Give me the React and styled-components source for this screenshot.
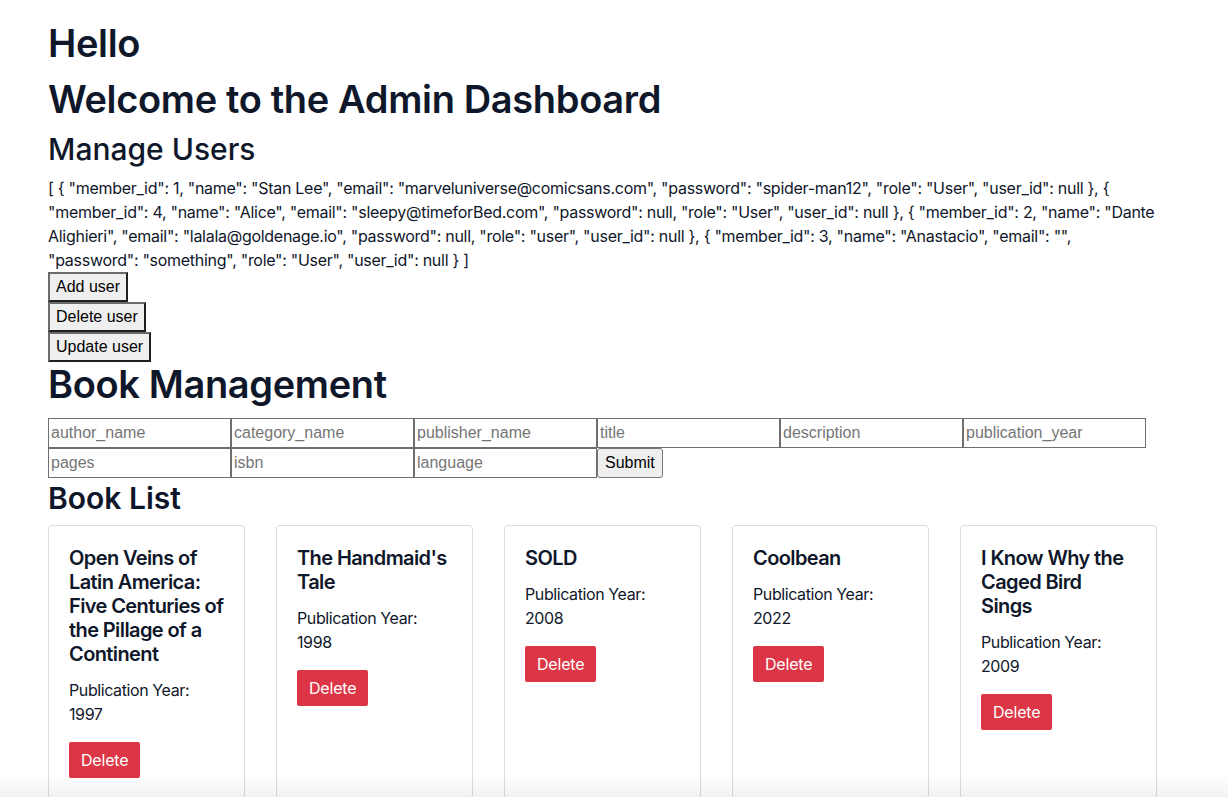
import React from 'react';
import styled, { createGlobalStyle } from 'styled-components';

const GlobalStyle = createGlobalStyle`
  html::-webkit-scrollbar { display: none; }
  html { scrollbar-width: none; }
  body {
    margin: 8px;
    background: #ffffff;
    color: #0f172a;
    font-family: Inter, "Noto Sans", sans-serif;
  }
`;

const Page = styled.div`
  width: 1115px;
  padding: 12px 40px 0;
`;

const Title = styled.h1`
  margin: ${(p) => p.$margin || '0 0 10px'};
  font-size: 38px;
  line-height: 46px;
  font-weight: 600;
  color: #0f172a;
  letter-spacing: -0.35px;
`;

const Section = styled.h2`
  margin: ${(p) => p.$margin || '0'};
  font-size: 30px;
  line-height: 36px;
  font-weight: ${(p) => p.$weight || 600};
  color: #0f172a;
`;

const Json = styled.p`
  margin: 0;
  font-size: 16px;
  line-height: 24px;
  letter-spacing: -0.28px;
  color: #0f172a;
`;

const ActionButton = styled.button`
  display: block;
  font-family: "Liberation Sans", Arial, sans-serif;
  font-size: 16px;
  line-height: 18px;
  padding: 4px 6px;
  color: #000;
  background: #efefef;
  border-style: solid;
  border-width: 2px;
  border-color: #6b6b6b #1f1f1f #1f1f1f #6b6b6b;
  border-radius: 0;
  cursor: pointer;
`;

const Form = styled.form`
  display: flex;
  flex-wrap: wrap;
  margin: 0;
`;

const Field = styled.input`
  box-sizing: border-box;
  width: 183px;
  height: 30px;
  padding: 0 2px;
  margin: 0;
  font-family: "Liberation Sans", Arial, sans-serif;
  font-size: 16px;
  color: #000;
  border: 1px solid #6e6e6e;
  border-radius: 0;
  background: #fff;

  &::placeholder {
    color: #757575;
  }
`;

const Submit = styled.button`
  box-sizing: border-box;
  height: 30px;
  padding: 0 7px;
  font-family: "Liberation Sans", Arial, sans-serif;
  font-size: 16px;
  color: #000;
  background: #efefef;
  border: 1px solid #767676;
  border-radius: 3px;
  cursor: pointer;
`;

const CardRow = styled.div`
  display: flex;
  gap: 31px;
  align-items: stretch;
`;

const Card = styled.div`
  box-sizing: border-box;
  width: 197px;
  flex: none;
  padding: 20px;
  border: 1px solid #dcdcdc;
  border-radius: 4px;
  background: #fff;
`;

const CardTitle = styled.h3`
  margin: 0 0 12px;
  font-size: 20px;
  line-height: 24px;
  font-weight: 600;
  letter-spacing: -0.6px;
  color: #0f172a;
`;

const CardText = styled.p`
  margin: 0 0 16px;
  font-size: 16px;
  line-height: 24px;
  letter-spacing: -0.4px;
  color: #0f172a;
`;

const DeleteButton = styled.button`
  padding: 6px 12px;
  font-family: Inter, "Noto Sans", sans-serif;
  font-size: 16px;
  line-height: 24px;
  letter-spacing: -0.2px;
  color: #fff;
  background: #dc3545;
  border: none;
  border-radius: 2px;
  cursor: pointer;
`;

const BottomFade = styled.div`
  position: fixed;
  left: 0;
  right: 0;
  bottom: 0;
  height: 24px;
  pointer-events: none;
  background: linear-gradient(to bottom, rgba(0, 0, 0, 0), rgba(0, 0, 0, 0.05));
`;

const users = [
  { member_id: 1, name: 'Stan Lee', email: 'marveluniverse@comicsans.com', password: 'spider-man12', role: 'User', user_id: null },
  { member_id: 4, name: 'Alice', email: 'sleepy@timeforBed.com', password: null, role: 'User', user_id: null },
  { member_id: 2, name: 'Dante Alighieri', email: 'lalala@goldenage.io', password: null, role: 'user', user_id: null },
  { member_id: 3, name: 'Anastacio', email: '', password: 'something', role: 'User', user_id: null },
];

const fields = [
  'author_name',
  'category_name',
  'publisher_name',
  'title',
  'description',
  'publication_year',
  'pages',
  'isbn',
  'language',
];

const books = [
  { title: 'Open Veins of Latin America: Five Centuries of the Pillage of a Continent', year: 1997 },
  { title: "The Handmaid's Tale", year: 1998 },
  { title: 'SOLD', year: 2008 },
  { title: 'Coolbean', year: 2022 },
  { title: 'I Know Why the Caged Bird Sings', year: 2009 },
];

const formatUsers = (list) =>
  '[ ' +
  list
    .map(
      (u) =>
        '{ ' +
        Object.entries(u)
          .map(([k, v]) => `"${k}": ${v === null ? 'null' : typeof v === 'number' ? v : `"${v}"`}`)
          .join(', ') +
        ' }'
    )
    .join(', ') +
  ' ]';

const App = () => {
  return (
    <Page>
      <GlobalStyle />
      <Title>Hello</Title>
      <Title>Welcome to the Admin Dashboard</Title>
      <Section $weight={500} $margin="-1px 0 9px">Manage Users</Section>
      <Json>{formatUsers(users)}</Json>
      <ActionButton>Add user</ActionButton>
      <ActionButton>Delete user</ActionButton>
      <ActionButton>Update user</ActionButton>
      <Title $margin="-1px 0 11px">Book Management</Title>
      <Form onSubmit={(e) => e.preventDefault()}>
        {fields.map((f) => (
          <Field key={f} name={f} placeholder={f} />
        ))}
        <Submit type="submit">Submit</Submit>
      </Form>
      <Section $margin="2px 0 9px">Book List</Section>
      <CardRow>
        {books.map((b) => (
          <Card key={b.title}>
            <CardTitle>{b.title}</CardTitle>
            <CardText>Publication Year: {b.year}</CardText>
            <DeleteButton>Delete</DeleteButton>
          </Card>
        ))}
      </CardRow>
      <BottomFade />
    </Page>
  );
};

export default App;
